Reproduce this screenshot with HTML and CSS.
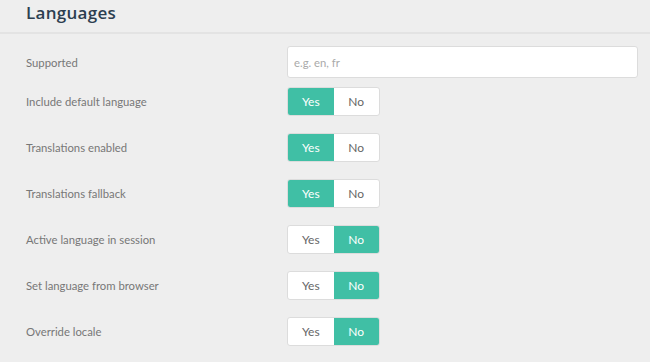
FILE: index.html
```html
<!DOCTYPE html>
<html lang="en">
<head>
  <meta charset="UTF-8">
  <title>Languages</title>
  <link rel="stylesheet" href="styles.css">
</head>
<body>
<div class="panel">
  <h2 class="panel-title">Languages</h2>

  <div class="fields">
    <div class="field">
      <label>Supported</label>
      <input type="text" class="text-input" placeholder="e.g. en, fr">
    </div>
    <div class="field">
      <label>Include default language</label>
      <div class="toggle"><span class="on">Yes</span><span>No</span></div>
    </div>
    <div class="field">
      <label>Translations enabled</label>
      <div class="toggle"><span class="on">Yes</span><span>No</span></div>
    </div>
    <div class="field">
      <label>Translations fallback</label>
      <div class="toggle"><span class="on">Yes</span><span>No</span></div>
    </div>
    <div class="field">
      <label>Active language in session</label>
      <div class="toggle"><span>Yes</span><span class="on">No</span></div>
    </div>
    <div class="field">
      <label>Set language from browser</label>
      <div class="toggle"><span>Yes</span><span class="on">No</span></div>
    </div>
    <div class="field">
      <label>Override locale</label>
      <div class="toggle"><span>Yes</span><span class="on">No</span></div>
    </div>
  </div>
</div>
</body>
</html>
```

FILE: styles.css
```css
body { margin: 0; background: #eeeeee; font-family: Lato, "Open Sans", sans-serif; }
.panel { width: 650px; height: 362px; overflow: hidden; }
.panel-title { margin: 0; height: 34px; padding: 0 0 0 26px; box-sizing: border-box; border-bottom: 2px solid #e3e3e3; font-family: "Open Sans", sans-serif; font-size: 17px; font-weight: 600; letter-spacing: 0.3px; line-height: 25px; color: #2c3e50; }
.fields { padding: 12px 12px 0 26px; }
.field { display: flex; align-items: center; margin-bottom: 17px; }
.field:first-child { margin-bottom: 9px; }
.field label { width: 261px; font-size: 11.3px; color: #777; }
.text-input { flex: 1; height: 32px; box-sizing: border-box; padding: 0 6px; border: 1px solid #dcdcdc; border-radius: 3px; background: #fff; font-family: Lato, sans-serif; font-size: 11.3px; color: #555; outline: none; }
.text-input::placeholder { color: #aaa; }
.toggle { display: flex; height: 29px; width: 93px; border: 1px solid #dcdcdc; border-radius: 3px; background: #fff; box-sizing: border-box; overflow: hidden; }
.toggle span { flex: 1; display: flex; align-items: center; justify-content: center; font-size: 12px; color: #666; }
.toggle span.on { background: #40bfa5; color: #fff; }
```
